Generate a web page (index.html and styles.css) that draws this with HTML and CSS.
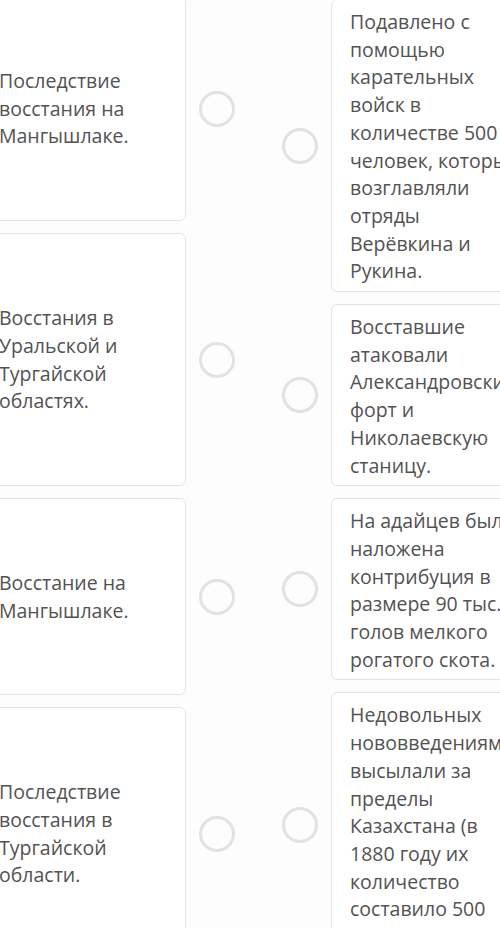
FILE: index.html
```html
<!DOCTYPE html>
<html lang="ru">
<head>
    <meta charset="UTF-8">
    <meta name="viewport" content="width=device-width, initial-scale=1.0">
    <title>Сопоставление</title>
    <link rel="stylesheet" href="styles.css">
</head>
<body>
    <div class="match">
        <div class="column column-left">
            <div class="pair">
                <div class="card">Последствие восстания на Мангышлаке.</div>
                <span class="dot"></span>
            </div>
            <div class="pair">
                <div class="card">Восстания в Уральской и Тургайской областях.</div>
                <span class="dot"></span>
            </div>
            <div class="pair">
                <div class="card">Восстание на Мангышлаке.</div>
                <span class="dot"></span>
            </div>
            <div class="pair">
                <div class="card">Последствие восстания в Тургайской области.</div>
                <span class="dot"></span>
            </div>
        </div>

        <div class="column column-right">
            <div class="pair">
                <span class="dot"></span>
                <div class="card">Подавлено с помощью карательных войск в количестве 500 человек, которые возглавляли отряды Верёвкина и Рукина.</div>
            </div>
            <div class="pair">
                <span class="dot"></span>
                <div class="card">Восставшие атаковали Александровский форт и Николаевскую станицу.</div>
            </div>
            <div class="pair">
                <span class="dot"></span>
                <div class="card">На адайцев была наложена контрибуция в размере 90 тыс. голов мелкого рогатого скота.</div>
            </div>
            <div class="pair">
                <span class="dot"></span>
                <div class="card">Недовольных нововведениями высылали за пределы Казахстана (в 1880 году их количество составило 500 человек).</div>
            </div>
        </div>
    </div>
</body>
</html>
```

FILE: styles.css
```css
html, body {
    overflow: hidden;
}

body {
    margin: 0;
    background-color: #fdfdfd;
    font-family: 'Open Sans', sans-serif;
    font-size: 19.5px;
    line-height: 27.7px;
    color: #525252;
}

.match {
    display: flex;
    align-items: flex-start;
    gap: 47px;
    margin: -4px 0 0 -20px;
}

.column {
    display: flex;
    flex-direction: column;
    gap: 12px;
}

.column-right {
    padding-top: 3px;
}

.pair {
    display: flex;
    align-items: center;
    gap: 13px;
}

.card {
    box-sizing: border-box;
    width: 206px;
    flex: none;
    padding: 70px 18px;
    background-color: #fff;
    border: 1px solid #e4e4e4;
    border-radius: 6px;
}

.column-right .card {
    width: 209px;
    padding: 8px 18px 6px;
}

.dot {
    box-sizing: border-box;
    flex: none;
    width: 36px;
    height: 36px;
    border: 3px solid #e2e2e2;
    border-radius: 50%;
}
```
